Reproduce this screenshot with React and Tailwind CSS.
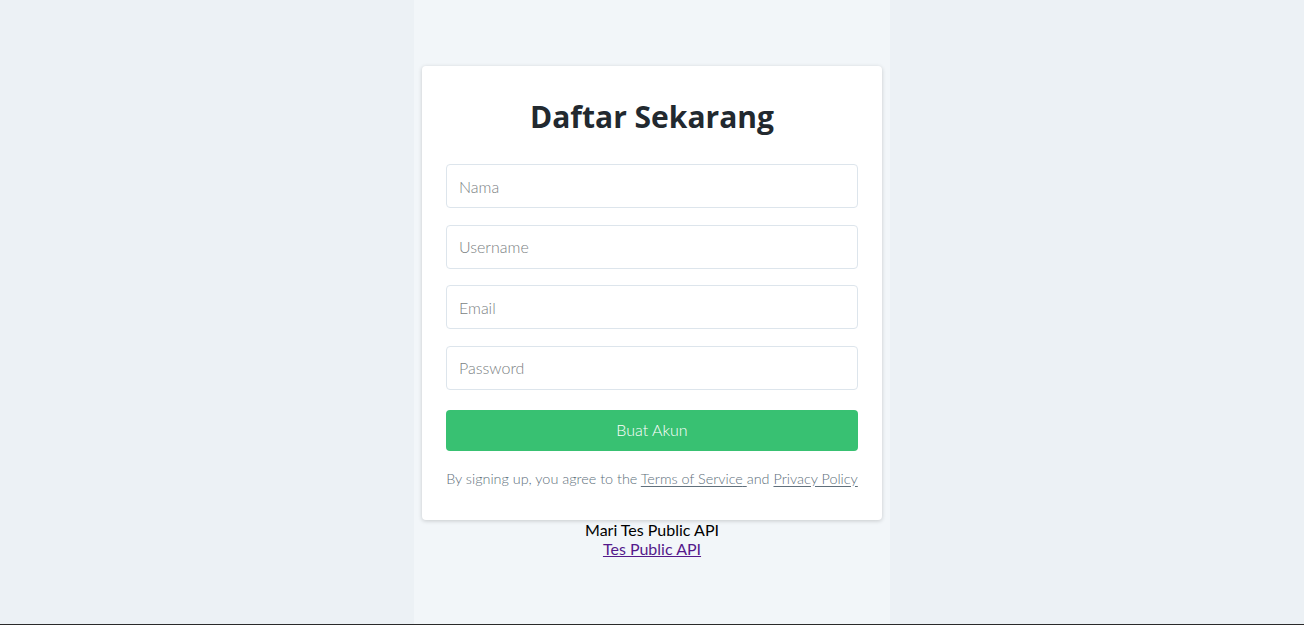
import React from "react";

const Field = ({ placeholder, type = "text" }) => (
  <input
    type={type}
    placeholder={placeholder}
    className="w-full h-[44px] px-3 rounded border border-[#dde5ec] bg-white text-[16px] font-light text-[#333] placeholder:text-[#7b7f83] outline-none"
  />
);

const App = () => {
  return (
    <div
      className="h-[625px] flex flex-col bg-[#ecf1f5]"
      style={{ fontFamily: "Lato, 'Noto Sans', sans-serif" }}
    >
      <div className="flex-1 flex justify-center">
        <div className="w-[476px] bg-[#f2f6f9] pt-[66px] flex flex-col items-center">
          {/* CARD */}
          <div className="w-[460px] bg-white rounded shadow-[0_1px_4px_rgba(0,0,0,0.18)] px-6 pt-[30px] pb-[31px]">
            <h1
              className="text-center text-[30px] font-bold text-[#22292f] leading-[42px]"
              style={{ fontFamily: "'Open Sans', sans-serif" }}
            >
              Daftar Sekarang
            </h1>

            <form className="mt-[26px] flex flex-col gap-[16.67px]">
              <Field placeholder="Nama" />
              <Field placeholder="Username" />
              <Field placeholder="Email" type="email" />
              <Field placeholder="Password" type="password" />
            </form>

            <button className="mt-[20px] w-full h-[41px] rounded bg-[#38c172] text-white text-[16px] font-light">
              Buat Akun
            </button>

            <p className="mt-[18px] text-center text-[14.4px] font-light text-[#606f7b] leading-[20px]">
              By signing up, you agree to the{" "}
              <a href="#" className="underline underline-offset-2">
                Terms of Service{" "}
              </a>
              and{" "}
              <a href="#" className="underline underline-offset-2">
                Privacy Policy
              </a>
            </p>
          </div>

          <div className="text-center text-[16px] leading-[19px] text-black">
            <p>Mari Tes Public API</p>
            <a href="#" className="underline text-[#551a8b]">
              Tes Public API
            </a>
          </div>
        </div>
      </div>
      <div className="h-px bg-[#2a2a2a]" />
    </div>
  );
};

export default App;
